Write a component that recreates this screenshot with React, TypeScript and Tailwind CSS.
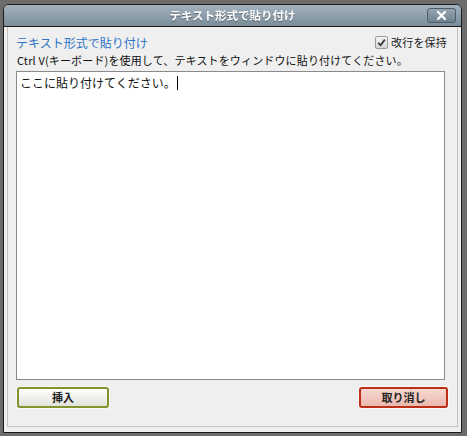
import React from "react";

const jp = { fontFamily: '"Noto Sans CJK JP", "Noto Sans", sans-serif' };

export default function App() {
  return (
    <div className="w-[467px] h-[436px] bg-[#6c6c6c] pt-[4px] pl-[3px] overflow-hidden" style={jp}>
      <div className="w-[459px] h-[429px] flex flex-col border border-[#1a1a1a] rounded-t-[6px] overflow-hidden bg-[#efefef]">
        {/* title bar */}
        <div className="relative h-[22px] shrink-0 flex items-center justify-center bg-gradient-to-b from-[#a3b2bd] to-[#7b8d9a] border-b border-[#1a1a1a]">
          <span className="text-white font-bold text-[11.5px] leading-none drop-shadow-[0_1px_0_rgba(0,0,0,0.35)]">テキスト形式で貼り付け</span>
          <div className="absolute right-[5px] top-[3px] w-[29px] h-[15px] rounded-[3px] border border-[#4d5d69] bg-gradient-to-b from-[#95a5b1] to-[#6f818e] flex items-center justify-center">
            <svg width="9" height="9" viewBox="0 0 9 9">
              <path d="M1 1 L8 8 M8 1 L1 8" stroke="white" strokeWidth="2.2" strokeLinecap="square" />
            </svg>
          </div>
        </div>
        {/* body */}
        <div className="flex-1 px-[3px] pb-[5px] flex">
          <div className="flex-1 border-l border-r border-b border-[#c9c2bb] flex flex-col pl-[8px] pr-[12px]">
            <div className="flex items-center justify-between h-[21px] mt-[5px]">
              <span className="text-[#2e73c6] text-[12px] leading-none">テキスト形式で貼り付け</span>
              <label className="flex items-center gap-[3px] mr-[-2px]">
                <span className="w-[13px] h-[13px] rounded-[2px] border border-[#9a9a9a] bg-gradient-to-b from-[#f4f4f4] to-[#d6d6d6] flex items-center justify-center">
                  <svg width="9" height="9" viewBox="0 0 9 9">
                    <path d="M1.2 4.8 L3.6 7.2 L7.8 1.6" stroke="#3a3a3a" strokeWidth="1.8" fill="none" />
                  </svg>
                </span>
                <span className="text-[11px] leading-none text-[#222] tracking-[0.2px]">改行を保持</span>
              </label>
            </div>
            <div className="text-[11px] leading-none text-[#111] h-[16px] flex items-center mt-[-1px] pl-[1px] tracking-[0.15px]">
              Ctrl V(キーボード)を使用して、テキストをウィンドウに貼り付けてください。
            </div>
            <div className="h-[309px] bg-white border border-[#8a8a8a] mt-[3px] px-[3px] pt-[4px] text-[12px] leading-[14px] text-[#111]">
              <span>ここに貼り付けてください。</span>
              <span className="inline-block w-[1px] h-[14px] bg-black align-top ml-[1px]" />
            </div>
            <div className="flex justify-between mt-[7px] pl-[1px]">
              <button className="w-[92px] h-[21px] rounded-[3px] border-2 border-[#83942f] bg-gradient-to-b from-[#ffffff] to-[#e2e2dc] text-[11px] font-bold text-[#222] flex items-center justify-center shadow-[0_0_0_1px_#f8f8f8]">
                挿入
              </button>
              <button className="w-[89px] h-[21px] mr-[-3px] rounded-[3px] border-2 border-[#bd2f16] bg-gradient-to-b from-[#f6d8d2] to-[#ebb9ae] text-[11px] font-bold text-[#222] flex items-center justify-center shadow-[0_0_0_1px_#f8f8f8]">
                取り消し
              </button>
            </div>
          </div>
        </div>
      </div>
    </div>
  );
}
